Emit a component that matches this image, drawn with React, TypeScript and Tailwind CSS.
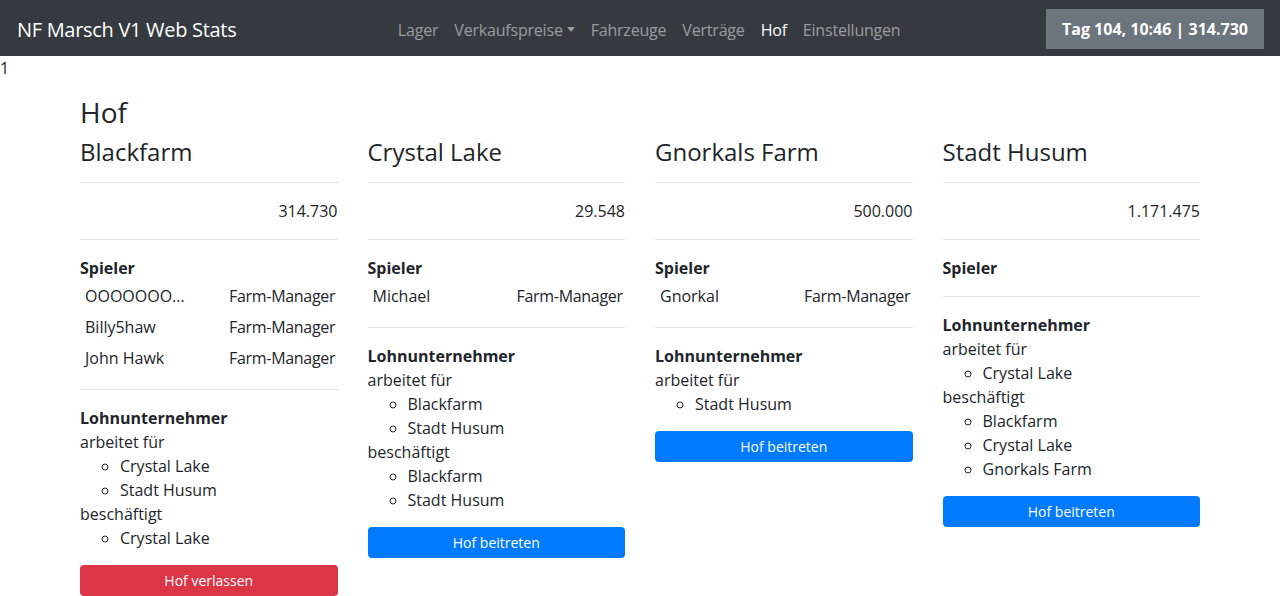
import React from "react";

type Spieler = { name: string; rolle: string };
type Hof = {
  name: string;
  geld: string;
  spieler: Spieler[];
  arbeitetFuer: string[];
  beschaeftigt: string[];
  mitglied?: boolean;
};

const hoefe: Hof[] = [
  {
    name: "Blackfarm",
    geld: "314.730",
    spieler: [
      { name: "OOOOOOO...", rolle: "Farm-Manager" },
      { name: "Billy5haw", rolle: "Farm-Manager" },
      { name: "John Hawk", rolle: "Farm-Manager" },
    ],
    arbeitetFuer: ["Crystal Lake", "Stadt Husum"],
    beschaeftigt: ["Crystal Lake"],
    mitglied: true,
  },
  {
    name: "Crystal Lake",
    geld: "29.548",
    spieler: [{ name: "Michael", rolle: "Farm-Manager" }],
    arbeitetFuer: ["Blackfarm", "Stadt Husum"],
    beschaeftigt: ["Blackfarm", "Stadt Husum"],
  },
  {
    name: "Gnorkals Farm",
    geld: "500.000",
    spieler: [{ name: "Gnorkal", rolle: "Farm-Manager" }],
    arbeitetFuer: ["Stadt Husum"],
    beschaeftigt: [],
  },
  {
    name: "Stadt Husum",
    geld: "1.171.475",
    spieler: [],
    arbeitetFuer: ["Crystal Lake"],
    beschaeftigt: ["Blackfarm", "Crystal Lake", "Gnorkals Farm"],
  },
];

const navLinks = ["Lager", "Verkaufspreise", "Fahrzeuge", "Verträge", "Hof", "Einstellungen"];

function Trenner() {
  return <hr className="my-4 border-0 border-t border-black/10" />;
}

function HofKarte({ hof }: { hof: Hof }) {
  return (
    <div>
      <h4 className="text-2xl leading-[1.2] font-normal">{hof.name}</h4>
      <Trenner />
      <div className="text-right">{hof.geld}</div>
      <Trenner />
      <div className="font-bold">Spieler</div>
      <div>
        {hof.spieler.map(s => (
          <div key={s.name} className="grid grid-cols-[144px_1fr] py-[3.5px] whitespace-nowrap">
            <div className="px-[5px] truncate">{s.name}</div>
            <div className="px-[5px] tracking-[-0.3px]">{s.rolle}</div>
          </div>
        ))}
      </div>
      <Trenner />
      <div className="font-bold">Lohnunternehmer</div>
      {hof.arbeitetFuer.length > 0 && (
        <>
          <div>arbeitet für</div>
          <ul className="list-[circle] pl-10">
            {hof.arbeitetFuer.map(h => <li key={h}>{h}</li>)}
          </ul>
        </>
      )}
      {hof.beschaeftigt.length > 0 && (
        <>
          <div>beschäftigt</div>
          <ul className="list-[circle] pl-10">
            {hof.beschaeftigt.map(h => <li key={h}>{h}</li>)}
          </ul>
        </>
      )}
      {hof.mitglied ? (
        <button className="mt-[15px] w-full h-[31px] rounded bg-[#dc3545] text-white text-sm">Hof verlassen</button>
      ) : (
        <button className="mt-[15px] w-full h-[31px] rounded bg-[#007bff] text-white text-sm">Hof beitreten</button>
      )}
    </div>
  );
}

export default function App() {
  return (
    <div className="min-h-screen bg-white text-[#212529] text-base leading-6" style={{ fontFamily: '"Open Sans", "Noto Sans", sans-serif' }}>
      {/* Navbar */}
      <nav className="h-14 bg-[#343a40] flex items-center px-4">
        <span className="text-white text-xl mr-4 pl-px pt-[3px] tracking-[-0.3px]">NF Marsch V1 Web Stats</span>
        <ul className="flex mx-auto pt-[3px] tracking-[-0.2px]">
          {navLinks.map(l => (
            <li key={l} className={"px-2 " + (l === "Hof" ? "text-white" : "text-white/50")}>
              {l}
              {l === "Verkaufspreise" && (
                <span className="inline-block align-[0.2em] ml-[4px] border-t-[5px] border-t-current border-x-[4px] border-x-transparent" />
              )}
            </li>
          ))}
        </ul>
        <div className="h-10 mt-px px-4 bg-[#6c757d] text-white font-bold flex items-center">Tag 104, 10:46 | 314.730</div>
      </nav>
      <div>1</div>

      <div className="w-[1120px] mx-auto pt-4 pb-2">
        <h3 className="text-[28px] leading-[1.2] mb-2">Hof</h3>
        <div className="grid grid-cols-4 gap-x-[30px] items-start">
          {hoefe.map(h => <HofKarte key={h.name} hof={h} />)}
        </div>
      </div>
    </div>
  );
}
